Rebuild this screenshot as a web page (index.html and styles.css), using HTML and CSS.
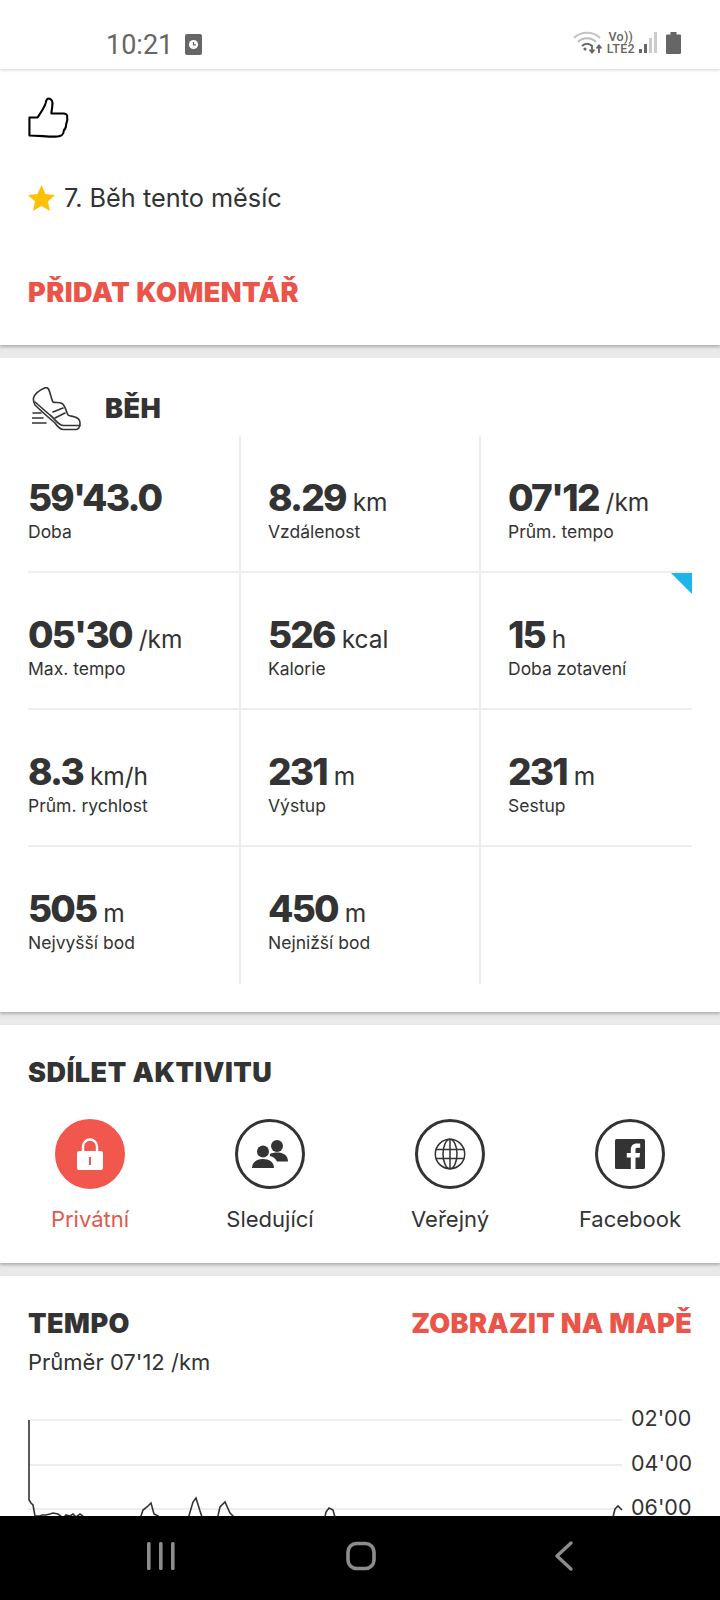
FILE: index.html
```html
<!DOCTYPE html>
<html>
<head>
  <title>Běh</title>
  <meta charset="utf-8" />
  <meta name="viewport" content="width=device-width, initial-scale=1.0" />
  <link rel="stylesheet" href="styles.css">
</head>
<body>
<div class="phone">
  <div class="statusbar">
    <div class="status-left">
      <span class="clock">10:21</span>
      <svg class="alarm" width="17" height="21" viewBox="0 0 17 21"><rect width="17" height="21" rx="2" fill="#666"/><circle cx="8.5" cy="10.5" r="4.6" fill="#fff"/><path d="M8.5 8v2.8h2.4" fill="none" stroke="#666" stroke-width="1.2"/></svg>
    </div>
    <div class="status-right">
      <svg width="30" height="24" viewBox="0 0 30 24">
        <path d="M1 7C8 0 20 0 27 7" fill="none" stroke="#c4c4c4" stroke-width="2"/>
        <path d="M5 11c5-5 13-5 18 0" fill="none" stroke="#bbb" stroke-width="2"/>
        <path d="M9 15c3-3 7-3 10 0" fill="none" stroke="#666" stroke-width="2"/>
        <circle cx="12" cy="18" r="1.6" fill="#666"/>
        <path d="M19 14v7M16.500 18.500l2.500 3 2.500-3" fill="none" stroke="#666" stroke-width="1.800"/>
        <path d="M26 22v-7M23.500 17.500l2.500-3 2.500 3" fill="none" stroke="#666" stroke-width="1.800"/>
      </svg>
      <div class="volte"><span>Vo))</span><span>LTE2</span></div>
      <svg width="18" height="22" viewBox="0 0 18 22">
        <rect x="0" y="17" width="3" height="4" fill="#666"/>
        <rect x="5" y="12" width="3" height="9" fill="#666"/>
        <rect x="10" y="6" width="3" height="15" fill="#ccc"/>
        <rect x="15" y="0" width="3" height="21" fill="#ccc"/>
      </svg>
      <svg class="battery" width="15" height="22" viewBox="0 0 15 22"><path d="M4.500 0h6v2.500H14a1 1 0 0 1 1 1V21a1 1 0 0 1-1 1H1a1 1 0 0 1-1-1V3.500a1 1 0 0 1 1-1h3.500z" fill="#666"/></svg>
    </div>
  </div>

  <div class="content">
    <section class="card intro">
      <svg class="thumb" width="42" height="42" viewBox="0 0 44 42" preserveAspectRatio="none"><path d="M1.500 38.500V20.500H10C13 16 17 11 18.500 6 19 3 20 1.500 22 1.500 25 2 26 5 25.500 8 25.500 11 24.500 14 24.500 16.500L37 16.500C40 16.500 41.500 18 41 20 42 23 41 25 40 27 40 30 39.500 32 37.500 33.500 37.500 37 35 39.500 31 39.500 22 40 12 38.500 1.500 38.500Z" fill="none" stroke="#000" stroke-width="2.200" stroke-linejoin="round"/></svg>
      <div class="rank">
        <svg width="27" height="26" viewBox="0 0 27 26"><path d="M13.500 0l4 9 9.500 1-7 6.500 2 9.500-8.500-5-8.500 5 2-9.500L0 10l9.500-1z" fill="#ffc107"/></svg>
        <span>7. Běh tento měsíc</span>
      </div>
      <a class="link add-comment">PŘIDAT KOMENTÁŘ</a>
    </section>

    <section class="card activity">
      <div class="activity-head">
        <svg width="50" height="44" viewBox="0 0 50 44" fill="none" stroke="#333" stroke-width="1.600" stroke-linejoin="round" stroke-linecap="round">
          <path d="M13 .8C8 3 3 6 1.500 11 1 14 2 16 3 18 9 24 16 30 23 36 25 39 28 42 31 42.500H44C47 42.500 48 40 48 36 48 33 46 31 43 30 40 29 37 29 36 28 34 24 33 18 30 16.500 27 15 23 16 21 15 19 12 18 3 16 1.500 15 .5 14 .5 13 .8Z"/>
          <path d="M3 15C9 20 13 24 18 28 22 31 26 38 31 38.500H48"/>
          <path d="M21 25L31 21M23 31L33 26"/>
          <path d="M1 26H9M0 31H11M0 36H14"/>
        </svg>
        <h2 class="title">BĚH</h2>
      </div>
      <div class="stats">
        <div class="stat"><div class="value"><b>59'43.0</b></div><div class="label">Doba</div></div>
        <div class="stat"><div class="value"><b>8.29</b> km</div><div class="label">Vzdálenost</div></div>
        <div class="stat"><div class="value"><b>07'12</b> /km</div><div class="label">Prům. tempo</div></div>
        <div class="stat"><div class="value"><b>05'30</b> /km</div><div class="label">Max. tempo</div></div>
        <div class="stat"><div class="value"><b>526</b> kcal</div><div class="label">Kalorie</div></div>
        <div class="stat flagged"><div class="value"><b>15</b> h</div><div class="label">Doba zotavení</div></div>
        <div class="stat"><div class="value"><b>8.3</b> km/h</div><div class="label">Prům. rychlost</div></div>
        <div class="stat"><div class="value"><b>231</b> m</div><div class="label">Výstup</div></div>
        <div class="stat"><div class="value"><b>231</b> m</div><div class="label">Sestup</div></div>
        <div class="stat"><div class="value"><b>505</b> m</div><div class="label">Nejvyšší bod</div></div>
        <div class="stat"><div class="value"><b>450</b> m</div><div class="label">Nejnižší bod</div></div>
        <div class="stat"></div>
      </div>
    </section>

    <section class="card share">
      <h2 class="title">SDÍLET AKTIVITU</h2>
      <div class="share-row">
        <div class="share-item active">
          <div class="circle">
            <svg width="28" height="34" viewBox="0 0 28 34"><path d="M7 15V9.500a7 7 0 0 1 14 0V15" fill="none" stroke="#fff" stroke-width="2.400"/><rect x="1" y="14" width="26" height="19" rx="2" fill="#fff"/><rect x="13" y="20" width="2" height="8" fill="#f1574d"/></svg>
          </div>
          <span>Privátní</span>
        </div>
        <div class="share-item">
          <div class="circle">
            <svg width="36" height="28" viewBox="0 0 36 28" fill="#333"><circle cx="11" cy="11.500" r="6"/><circle cx="25" cy="6" r="6"/><path d="M0 28c0-6 5-9 11-9s11 3 11 9z"/><path d="M18 14c2-1 4-1.500 7-1.500 6 0 11 2.500 11 9h-11c-1.500-3-4-5-7-5.500z"/></svg>
          </div>
          <span>Sledující</span>
        </div>
        <div class="share-item">
          <div class="circle">
            <svg width="32" height="32" viewBox="0 0 32 32" fill="none" stroke="#333" stroke-width="1.500"><circle cx="16" cy="16" r="14.700"/><ellipse cx="16" cy="16" rx="7" ry="14.700"/><path d="M16 1v30M1.500 11.500h29M1.500 20.500h29"/></svg>
          </div>
          <span>Veřejný</span>
        </div>
        <div class="share-item">
          <div class="circle">
            <svg width="30" height="30" viewBox="0 0 30 30"><rect width="30" height="30" rx="1.500" fill="#333"/><path d="M20.500 30V18.500h4l.6-4.600h-4.600V11c0-1.400.4-2.300 2.300-2.300h2.400V4.600C24.300 4.500 23 4.400 21.800 4.400c-3.600 0-6 2.200-6 6.100v3.400h-4v4.600h4V30z" fill="#fff"/></svg>
          </div>
          <span>Facebook</span>
        </div>
      </div>
    </section>

    <section class="card tempo">
      <div class="tempo-head">
        <h2 class="title">TEMPO</h2>
        <a class="link">ZOBRAZIT NA MAPĚ</a>
      </div>
      <div class="average">Průměr 07'12 /km</div>
      <div class="chart">
        <div class="tick"><i></i><span>02'00</span></div>
        <div class="tick"><i></i><span>04'00</span></div>
        <div class="tick"><i></i><span>06'00</span></div>
        <svg class="line" width="604" height="110" viewBox="0 0 604 110">
          <path d="M1 1V81L3 84 5 86 7 97H12L14 96 18 96 22 95 25 94 30 95 34 98 36 98 38 96 42 97 45 95 48 98 52 95 56 98 60 100M112 100L115 91 119 88 123 84 126 95 130 97 133 101M160 100L165 83 168 79 172 92 175 101M189 101L192 88 197 83 202 94 206 98 208 102M296 102L298 93 301 89 305 91 308 102M372 102L374 100 376 102M398 102L401 100 403 102M584 102L587 90 590 87 594 91" fill="none" stroke="#333" stroke-width="1.600"/>
        </svg>
      </div>
    </section>
  </div>

  <div class="navbar">
    <svg width="30" height="30" viewBox="0 0 30 30" fill="#8c8c8c"><rect x="1" y="1" width="3.600" height="28" rx="1.500"/><rect x="13" y="1" width="3.600" height="28" rx="1.500"/><rect x="25" y="1" width="3.600" height="28" rx="1.500"/></svg>
    <svg class="home" width="32" height="30" viewBox="0 0 32 30"><rect x="3" y="2.500" width="26" height="25" rx="8.500" fill="none" stroke="#8c8c8c" stroke-width="3.600"/></svg>
    <svg width="22" height="32" viewBox="0 0 22 32"><path d="M18 3L4 16l14 13" fill="none" stroke="#8c8c8c" stroke-width="3.400" stroke-linecap="round" stroke-linejoin="round"/></svg>
  </div>
</div>
</body>
</html>
```

FILE: styles.css
```css
* {
  box-sizing: border-box;
}

body {
  margin: 0;
  background: #e9e9e9;
  color: #333;
  font-family: 'Inter', 'Noto Sans', sans-serif;
}

.phone {
  width: 720px;
  height: 1600px;
  display: flex;
  flex-direction: column;
  overflow: hidden;
}

/* status bar */
.statusbar {
  height: 69px;
  flex: none;
  padding: 0 39px 0 106px;
  background: #fff;
  display: flex;
  align-items: center;
  justify-content: space-between;
  box-shadow: 0 1px 3px rgba(0,0,0,0.18);
  position: relative;
  z-index: 1;
}

.status-left, .status-right {
  display: flex;
  align-items: center;
}

.status-left {
  gap: 12px;
  padding-top: 20px;
}

.status-right {
  gap: 4px;
  padding-top: 17px;
}

.battery {
  margin-left: 5px;
}

.clock {
  font-family: 'Roboto', sans-serif;
  font-size: 27px;
  color: #666;
}

.volte {
  display: flex;
  flex-direction: column;
  align-items: center;
  font-family: 'Roboto', sans-serif;
  font-size: 12.500px;
  font-weight: 500;
  letter-spacing: 0.3px;
  line-height: 12px;
  color: #666;
}

/* cards */
.content {
  flex: 1;
  min-height: 0;
  overflow: hidden;
  display: flex;
  flex-direction: column;
  gap: 13px;
}

.card {
  background: #fff;
  flex: none;
  box-shadow: 0 2px 3px rgba(0,0,0,0.25);
}

.title {
  margin: 0;
  font-size: 27px;
  line-height: 32px;
  font-weight: 900;
  letter-spacing: 0.5px;
  color: #333;
}

.link {
  font-size: 27px;
  line-height: 32px;
  font-weight: 900;
  letter-spacing: 0.3px;
  color: #eb5449;
}

.intro {
  height: 276px;
  padding: 28px 28px 0;
  display: flex;
  flex-direction: column;
  align-items: flex-start;
}

.rank {
  display: flex;
  align-items: center;
  gap: 9px;
  margin-top: 44px;
  font-size: 25.300px;
  line-height: 30px;
}

.add-comment {
  margin-top: 64px;
  letter-spacing: 0.5px;
}

.activity {
  height: 654px;
  padding: 0 28px;
}

.activity-head {
  height: 78px;
  display: flex;
  align-items: center;
  gap: 23px;
  padding: 24px 0 0 4px;
}

.stats {
  display: grid;
  grid-template-columns: 211px 240px 1fr;
  grid-auto-rows: 137px;
}

.stat {
  position: relative;
  padding: 40px 0 0 27px;
  border-left: 2px solid #eee;
  border-bottom: 2px solid #eee;
}

.stat:nth-child(3n+1) {
  padding-left: 0;
  border-left: 0;
}

.stat:nth-last-child(-n+3) {
  border-bottom: 0;
}

/* flag in the corner of the recovery tile */
.flagged::after {
  content: "";
  position: absolute;
  top: 0;
  right: 0;
  border-style: solid;
  border-width: 0 21px 21px 0;
  border-color: transparent #1db5ea transparent transparent;
}

.value {
  font-size: 24.500px;
  line-height: 44px;
  white-space: nowrap;
}

.value b {
  font-size: 37px;
  font-weight: 800;
  letter-spacing: -1.800px;
}

.label {
  font-size: 17.500px;
  line-height: 22px;
  margin-top: -3px;
}

.share {
  height: 238px;
  padding-top: 32px;
}

.share .title {
  padding-left: 28px;
}

.share-row {
  display: grid;
  grid-template-columns: repeat(4, 180px);
  margin-top: 30px;
}

.share-item {
  display: flex;
  flex-direction: column;
  align-items: center;
  gap: 17px;
  font-size: 22px;
  line-height: 27px;
}

.circle {
  width: 70px;
  height: 70px;
  border: 3px solid #333;
  border-radius: 50%;
  display: flex;
  align-items: center;
  justify-content: center;
}

.active {
  color: #e0584f;
}

.active .circle {
  background: #f1574d;
  border-color: #f1574d;
}

.tempo {
  height: 300px;
  padding: 32px 28px 0;
}

.tempo-head {
  display: flex;
  justify-content: space-between;
}

.average {
  font-size: 22px;
  line-height: 27px;
  margin-top: 9px;
}

/* chart: grid lines with labels, the pace curve lies on top */
.chart {
  position: relative;
  margin-top: 43px;
}

.tick {
  height: 44.500px;
  display: flex;
  align-items: flex-start;
  gap: 9px;
}

.tick i {
  flex: 1;
  height: 2px;
  background: #eee;
}

.tick span {
  flex: none;
  width: 61px;
  font-size: 21.500px;
  line-height: 24px;
  margin-top: -13px;
}

.line {
  position: absolute;
  top: 0;
  left: 0;
}

.navbar {
  height: 84px;
  flex: none;
  padding-bottom: 4px;
  background: #000;
  display: grid;
  grid-template-columns: 324px 72px 324px;
  justify-items: center;
  align-items: center;
  position: relative;
  z-index: 1;
}

.navbar svg:first-child {
  justify-self: end;
  margin-right: 148px;
}

.navbar .home {
  margin-left: 2px;
}

.navbar svg:last-child {
  justify-self: start;
  margin-left: 157px;
}
```
